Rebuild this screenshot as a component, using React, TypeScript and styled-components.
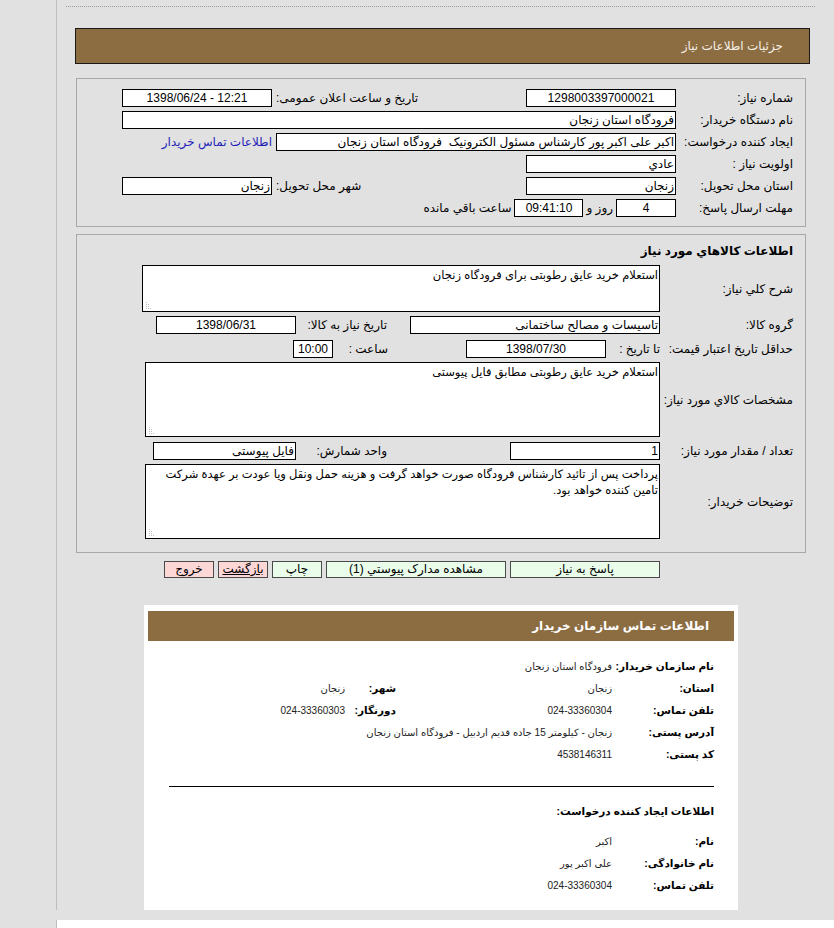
import React from "react";
import styled, { createGlobalStyle } from "styled-components";

const GlobalStyle = createGlobalStyle`
  html, body { margin: 0; padding: 0; background: #e1e1e1; }
  body {
    font-family: "Liberation Sans", "DejaVu Sans", sans-serif;
    font-size: 12px;
    color: #000;
  }
`;

const BROWN = "#8c6c41";

const Page = styled.div`
  display: flex;
  flex-direction: column;
  padding-left: 56px;
  width: 834px;
  box-sizing: border-box;
`;

const Main = styled.div`
  border-left: 1px solid #bdbdbd;
  display: flex;
  flex-direction: column;
`;

const TopRule = styled.div`
  height: 6px;
  margin: 0 19px 0 9px;
  border-bottom: 1px dotted #9a9a9a;
`;

const PageHeader = styled.div`
  margin: 21px 24px 0 18px;
  height: 36px;
  box-sizing: border-box;
  border: 1px solid #1a1a1a;
  background: ${BROWN};
  color: #f4f0e8;
  direction: rtl;
  padding-right: 26px;
  line-height: 34px;
  font-size: 12px;
`;

const Section = styled.section<{ $mt: number; $pt: number; $pb: number }>`
  margin: ${(p) => p.$mt}px 28px 0 19px;
  border: 1px solid #a8a8a8;
  direction: rtl;
  padding: ${(p) => p.$pt}px 12px ${(p) => p.$pb}px 0;
`;

const InfoGrid = styled.div`
  display: grid;
  grid-template-columns: 117px 250px 154px 150px;
  grid-auto-rows: 22px;
  align-items: center;
`;

const Label = styled.div<{ $end?: boolean; $span?: string }>`
  white-space: nowrap;
  text-align: ${(p) => (p.$end ? "left" : "right")};
  padding-left: ${(p) => (p.$end ? 4 : 0)}px;
  ${(p) => (p.$span ? `grid-column: ${p.$span};` : "")}
`;

const Field = styled.div<{
  $w?: number;
  $center?: boolean;
  $ltr?: boolean;
  $span?: string;
}>`
  box-sizing: border-box;
  width: ${(p) => (p.$w ? `${p.$w}px` : "100%")};
  flex: none;
  height: 18px;
  border: 1px solid #000;
  background: #fff;
  line-height: 16px;
  padding: 0 1px;
  text-align: ${(p) => (p.$center ? "center" : "right")};
  direction: ${(p) => (p.$ltr ? "ltr" : "rtl")};
  white-space: nowrap;
  overflow: hidden;
  ${(p) => (p.$span ? `grid-column: ${p.$span};` : "")}
`;

const Inline = styled.div<{ $span?: string }>`
  display: flex;
  align-items: center;
  gap: 3px;
  white-space: nowrap;
  ${(p) => (p.$span ? `grid-column: ${p.$span};` : "")}
`;

const Link = styled.a`
  color: #1f1fb8;
  text-decoration: none;
  white-space: nowrap;
  cursor: pointer;
`;

const GoodsTitle = styled.div`
  height: 24px;
  line-height: 24px;
  font-weight: bold;
  font-size: 12px;
`;

const Rows = styled.div`
  display: flex;
  flex-direction: column;
  gap: 2px;
`;

const Row = styled.div<{ $h: number }>`
  display: flex;
  align-items: center;
  height: ${(p) => p.$h}px;
`;

const RowLabel = styled.div`
  width: 133px;
  flex: none;
  white-space: nowrap;
`;

const Cell = styled.div<{ $w: number; $pr?: number }>`
  width: ${(p) => p.$w}px;
  flex: none;
  box-sizing: border-box;
  padding-right: ${(p) => p.$pr ?? 0}px;
  white-space: nowrap;
`;

const TextBox = styled.div<{ $w: number; $h: number }>`
  position: relative;
  box-sizing: border-box;
  width: ${(p) => p.$w}px;
  height: ${(p) => p.$h}px;
  align-self: flex-start;
  border: 1px solid #000;
  background: #fff;
  padding: 1px 1px 0 2px;
  font-size: 11.5px;
  line-height: 16px;
  text-align: right;
  overflow: hidden;
  &::after {
    content: "";
    position: absolute;
    left: 3px;
    bottom: 2px;
    width: 1px;
    height: 1px;
    background: #bcbcbc;
    box-shadow: 2px 0 #bcbcbc, 4px 0 #bcbcbc, 0 -2px #bcbcbc, 2px -2px #bcbcbc,
      0 -4px #bcbcbc, 2px -4px #bcbcbc, 0 -6px #bcbcbc;
  }
`;

const Buttons = styled.div`
  display: flex;
  direction: rtl;
  gap: 4px;
  margin: 8px 174px 0 0;
`;

const Btn = styled.button<{ $w: number; $tone: "green" | "pink"; $u?: boolean }>`
  width: ${(p) => p.$w}px;
  height: 17px;
  box-sizing: border-box;
  border: 1px solid #4a4a4a;
  background: ${(p) => (p.$tone === "green" ? "#eafdea" : "#fdd6d6")};
  font-family: inherit;
  font-size: 12px;
  line-height: 15px;
  padding: 0;
  color: #000;
  text-decoration: ${(p) => (p.$u ? "underline" : "none")};
  cursor: pointer;
`;

const Card = styled.div`
  margin: 27px 0 0 87px;
  width: 594px;
  height: 305px;
  box-sizing: border-box;
  background: #fff;
  padding: 6px 4px 0;
  direction: rtl;
`;

const CardHead = styled.div`
  height: 30px;
  background: ${BROWN};
  color: #fff;
  font-weight: bold;
  font-size: 12px;
  line-height: 30px;
  padding-right: 25px;
`;

const ContactGrid = styled.div<{ $mt: number }>`
  display: grid;
  grid-template-columns: 102px 216px 51px auto;
  grid-auto-rows: 22px;
  align-items: center;
  margin-top: ${(p) => p.$mt}px;
  padding-right: 20px;
`;

const CLabel = styled.div`
  font-weight: bold;
  font-size: 10.5px;
  white-space: nowrap;
`;

const CValue = styled.div<{ $span?: string }>`
  font-size: 10px;
  color: #222;
  white-space: nowrap;
  ${(p) => (p.$span ? `grid-column: ${p.$span};` : "")}
`;

const Divider = styled.hr`
  margin: 21px 20px 0 21px;
  border: none;
  border-top: 1px solid #000;
  height: 0;
`;

const SubTitle = styled.div`
  margin-top: 13px;
  height: 22px;
  line-height: 22px;
  padding-right: 20px;
  font-weight: bold;
  font-size: 10.5px;
`;

const Footer = styled.div`
  margin-top: 10px;
  height: 20px;
  background: #fff;
  border-left: 1px solid #bdbdbd;
`;

export default function App() {
  return (
    <>
      <GlobalStyle />
      <Page>
        <Main>
          <TopRule />
          <PageHeader>جزئیات اطلاعات نیاز</PageHeader>

          <Section $mt={14} $pt={8} $pb={7}>
            <InfoGrid>
              <Label>شماره نیاز:</Label>
              <Field $w={150} $center $ltr>1298003397000021</Field>
              <Label $end>تاریخ و ساعت اعلان عمومی:</Label>
              <Field $w={150} $center $ltr>1398/06/24 - 12:21</Field>

              <Label>نام دستگاه خریدار:</Label>
              <Field $span="2 / 5" $w={554}>فرودگاه استان زنجان</Field>

              <Label>ایجاد کننده درخواست:</Label>
              <Field $span="2 / 4" $w={400}>
                اکبر علی اکبر پور کارشناس مسئول الکترونیک&nbsp;&nbsp;فرودگاه استان زنجان
              </Field>
              <Inline>
                <Link>اطلاعات تماس خریدار</Link>
              </Inline>

              <Label>اولویت نیاز :</Label>
              <Field $w={150} $span="2 / 5">عادي</Field>

              <Label>استان محل تحویل:</Label>
              <Field $w={150}>زنجان</Field>
              <Label $end>شهر محل تحویل:</Label>
              <Field $w={150}>زنجان</Field>

              <Label>مهلت ارسال پاسخ:</Label>
              <Inline $span="2 / 5">
                <Field $w={60} $center>4</Field>
                <span>روز و</span>
                <Field $w={69} $center $ltr>09:41:10</Field>
                <span>ساعت باقي مانده</span>
              </Inline>
            </InfoGrid>
          </Section>

          <Section $mt={7} $pt={4} $pb={12}>
            <Rows>
              <GoodsTitle>اطلاعات كالاهاي مورد نیاز</GoodsTitle>
              <Row $h={47}>
                <RowLabel>شرح کلي نیاز:</RowLabel>
                <TextBox $w={518} $h={47}>
                  استعلام خرید عایق رطوبتی برای فرودگاه زنجان
                </TextBox>
              </Row>
              <Row $h={22}>
                <RowLabel>گروه کالا:</RowLabel>
                <Field $w={250}>تاسیسات و مصالح ساختمانی</Field>
                <Cell $w={114} $pr={23}>تاریخ نیاز به کالا:</Cell>
                <Field $w={140} $center $ltr>1398/06/31</Field>
              </Row>
              <Row $h={22}>
                <RowLabel>حداقل تاریخ اعتبار قیمت:</RowLabel>
                <Cell $w={54}>تا تاریخ :</Cell>
                <Field $w={140} $center $ltr>1398/07/30</Field>
                <Cell $w={133} $pr={78}>ساعت :</Cell>
                <Field $w={40} $center $ltr>10:00</Field>
              </Row>
              <Row $h={76}>
                <RowLabel>مشخصات كالاي مورد نیاز:</RowLabel>
                <TextBox $w={515} $h={75}>
                  استعلام خرید عایق رطوبتی مطابق فایل پیوستی
                </TextBox>
              </Row>
              <Row $h={22}>
                <RowLabel>تعداد / مقدار مورد نیاز:</RowLabel>
                <Field $w={150}>1</Field>
                <Cell $w={214} $pr={123}>واحد شمارش:</Cell>
                <Field $w={143}>فایل پیوستی</Field>
              </Row>
              <Row $h={76}>
                <RowLabel>توضیحات خریدار:</RowLabel>
                <TextBox $w={515} $h={75}>
                  پرداخت پس از تائید کارشناس فرودگاه صورت خواهد گرفت و هزینه حمل ونقل ویا عودت بر عهدة شرکت تامین کننده خواهد بود.
                </TextBox>
              </Row>
            </Rows>
          </Section>

          <Buttons>
            <Btn $w={150} $tone="green">پاسخ به نیاز</Btn>
            <Btn $w={180} $tone="green">مشاهده مدارک پیوستي (1)</Btn>
            <Btn $w={50} $tone="green">چاپ</Btn>
            <Btn $w={50} $tone="pink" $u>بازگشت</Btn>
            <Btn $w={50} $tone="pink">خروج</Btn>
          </Buttons>

          <Card>
            <CardHead>اطلاعات تماس سازمان خریدار</CardHead>
            <ContactGrid $mt={14}>
              <CLabel>نام سازمان خریدار:</CLabel>
              <CValue $span="2 / 5">فرودگاه استان زنجان</CValue>

              <CLabel>استان:</CLabel>
              <CValue>زنجان</CValue>
              <CLabel>شهر:</CLabel>
              <CValue>زنجان</CValue>

              <CLabel>تلفن تماس:</CLabel>
              <CValue>024-33360304</CValue>
              <CLabel>دورنگار:</CLabel>
              <CValue>024-33360303</CValue>

              <CLabel>آدرس پستی:</CLabel>
              <CValue $span="2 / 5">
                زنجان - کیلومتر 15 جاده قدیم اردبیل - فرودگاه استان زنجان
              </CValue>

              <CLabel>کد پستی:</CLabel>
              <CValue $span="2 / 5">4538146311</CValue>
            </ContactGrid>
            <Divider />
            <SubTitle>اطلاعات ایجاد کننده درخواست:</SubTitle>
            <ContactGrid $mt={8}>
              <CLabel>نام:</CLabel>
              <CValue $span="2 / 5">اکبر</CValue>
              <CLabel>نام خانوادگی:</CLabel>
              <CValue $span="2 / 5">علی اکبر پور</CValue>
              <CLabel>تلفن تماس:</CLabel>
              <CValue $span="2 / 5">024-33360304</CValue>
            </ContactGrid>
          </Card>
        </Main>
        <Footer />
      </Page>
    </>
  );
}
